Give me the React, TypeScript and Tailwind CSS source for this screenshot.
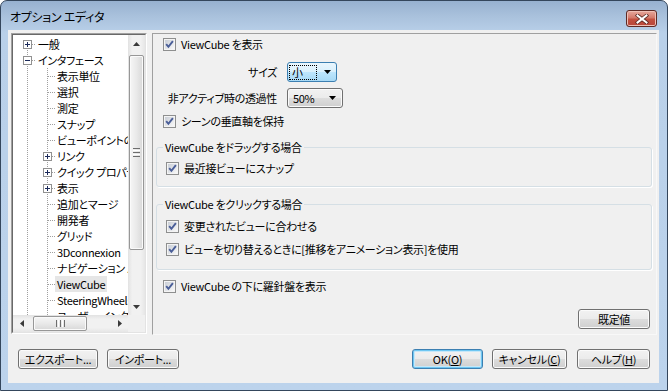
import React from "react";

const FONT =
  "font-['Noto_Sans_CJK_JP','Noto_Sans',sans-serif] [font-feature-settings:'palt'] text-[11px] tracking-[-0.3px] text-black";

function Check() {
  return (
    <svg width="13" height="13" viewBox="0 0 13 13" className="shrink-0">
      <defs>
        <linearGradient id="cbg" x1="0" y1="0" x2="1" y2="1">
          <stop offset="0" stopColor="#c9ced6" />
          <stop offset="1" stopColor="#f8f8f8" />
        </linearGradient>
      </defs>
      <rect x="0.5" y="0.5" width="12" height="12" fill="#f4f4f4" stroke="#8e8f8f" />
      <rect x="2" y="2" width="9" height="9" fill="url(#cbg)" />
      <path d="M3.2 6.2 L5.4 8.8 L9.9 3.2" fill="none" stroke="#4a5e98" strokeWidth="1.9" />
    </svg>
  );
}

function CheckRow({ label, className = "" }: { label: string; className?: string }) {
  return (
    <div className={"flex h-[20px] items-center " + className}>
      <Check />
      <span className="ml-[5px] whitespace-nowrap leading-[16px]">{label}</span>
    </div>
  );
}

function Arrow() {
  return (
    <svg width="7" height="4" viewBox="0 0 7 4" className="shrink-0">
      <polygon points="0,0 7,0 3.5,4" fill="#000" />
    </svg>
  );
}

const SURF =
  "h-[20px] rounded-[3px] border border-[#707070] bg-[linear-gradient(to_bottom,#f2f2f2_0%,#ebebeb_50%,#dddddd_50%,#cfcfcf_100%)] shadow-[inset_0_0_0_1px_#fbfbfb] leading-[16px] whitespace-nowrap";

const BTN = "flex items-center justify-center " + SURF;

const BTN_DEF =
  "flex h-[20px] items-center justify-center rounded-[3px] border border-[#3c7fb1] bg-[linear-gradient(to_bottom,#f2f2f2_0%,#ebebeb_50%,#dddddd_50%,#cfcfcf_100%)] shadow-[inset_0_0_0_1px_#6fc7f2,inset_0_0_0_2px_#c6e7f8] leading-[16px] whitespace-nowrap";

type Item = { label: string; level: 0 | 1; exp?: "+" | "-"; sel?: boolean; first?: boolean };

const items: Item[] = [
  { label: "一般", level: 0, exp: "+", first: true },
  { label: "インタフェース", level: 0, exp: "-" },
  { label: "表示単位", level: 1 },
  { label: "選択", level: 1 },
  { label: "測定", level: 1 },
  { label: "スナップ", level: 1 },
  { label: "ビューポイントのデフォルト", level: 1 },
  { label: "リンク", level: 1, exp: "+" },
  { label: "クイック プロパティ", level: 1, exp: "+" },
  { label: "表示", level: 1, exp: "+" },
  { label: "追加とマージ", level: 1 },
  { label: "開発者", level: 1 },
  { label: "グリッド", level: 1 },
  { label: "3Dconnexion", level: 1 },
  { label: "ナビゲーション バー", level: 1 },
  { label: "ViewCube", level: 1, sel: true },
  { label: "SteeringWheels", level: 1 },
  { label: "ユーザー インタフェース", level: 1 },
];

function Expander({ x, kind }: { x: number; kind: "+" | "-" }) {
  const c = x + 4;
  return (
    <g>
      <rect x={x + 0.5} y="4.5" width="8" height="8" fill="#fff" stroke="#919191" />
      <line x1={x + 2} y1="8.5" x2={x + 7} y2="8.5" stroke="#1b2a5a" />
      {kind === "+" && <line x1={c + 0.5} y1="6" x2={c + 0.5} y2="11" stroke="#1b2a5a" />}
    </g>
  );
}

function TreeRow({ it }: { it: Item }) {
  const w = it.level === 0 ? 23 : 42;
  const dot = { stroke: "#a0a0a0", strokeDasharray: "1 1" };
  return (
    <div className="flex h-[16px] items-center whitespace-nowrap">
      <svg width={w} height="16" className="shrink-0" shapeRendering="crispEdges">
        <line x1="14.5" y1={it.first ? 8 : 0} x2="14.5" y2="16" {...dot} />
        {it.level === 0 && <line x1="15" y1="8.5" x2="23" y2="8.5" {...dot} />}
        {it.level === 1 && (
          <>
            <line x1="34.5" y1="0" x2="34.5" y2="16" {...dot} />
            <line x1="35" y1="8.5" x2="42" y2="8.5" {...dot} />
          </>
        )}
        {it.exp && <Expander x={it.level === 0 ? 10 : 30} kind={it.exp} />}
      </svg>
      <span className={"px-[2px] leading-[16px] " + (it.sel ? "bg-[#e6e6e6]" : "")}>{it.label}</span>
    </div>
  );
}

function ArrowGlyph({ dir }: { dir: "up" | "down" | "left" | "right" }) {
  const pts =
    dir === "up"
      ? "0,4 7,4 3.5,0"
      : dir === "down"
      ? "0,0 7,0 3.5,4"
      : dir === "left"
      ? "4,0 4,7 0,3.5"
      : "0,0 0,7 4,3.5";
  const vert = dir === "up" || dir === "down";
  return (
    <svg width={vert ? 7 : 4} height={vert ? 4 : 7} className="shrink-0">
      <polygon points={pts} fill="#3a3a3a" />
    </svg>
  );
}

function Tree() {
  return (
    <div className="h-[301px] w-[136px] shrink-0 border border-t-[#a0a0a0] border-l-[#a0a0a0] border-r-white border-b-white">
      <div className="grid h-full w-full grid-cols-[115px_17px] grid-rows-[280px_17px] border border-t-[#696969] border-l-[#696969] border-r-[#e3e3e3] border-b-[#e3e3e3]">
        <div className="overflow-hidden bg-white pt-[1px]">
          {items.map((it, i) => (
            <TreeRow key={i} it={it} />
          ))}
        </div>
        {/* vertical scrollbar */}
        <div className="flex flex-col bg-[linear-gradient(to_right,#e2e2e2,#f1f1f1_25%,#f1f1f1_75%,#e6e6e6)]">
          <div className="flex h-[17px] items-center justify-center">
            <ArrowGlyph dir="up" />
          </div>
          <div className="mt-[3px] mx-[1px] flex h-[195px] flex-col items-center justify-center gap-[1px] rounded-[2px] border border-[#979797] bg-[linear-gradient(to_right,#f6f6f6,#e9e9e9_50%,#d8d8d8)] shadow-[inset_0_0_0_1px_#fafafa]">
            <div className="h-[1px] w-[7px] bg-[#6e6e6e]" />
            <div className="h-[1px] w-[7px] bg-[#fff]" />
            <div className="h-[1px] w-[7px] bg-[#6e6e6e]" />
            <div className="h-[1px] w-[7px] bg-[#fff]" />
            <div className="h-[1px] w-[7px] bg-[#6e6e6e]" />
          </div>
          <div className="flex-1" />
          <div className="flex h-[17px] items-center justify-center">
            <ArrowGlyph dir="down" />
          </div>
        </div>
        {/* horizontal scrollbar */}
        <div className="flex bg-[linear-gradient(to_bottom,#e2e2e2,#f1f1f1_25%,#f1f1f1_75%,#e6e6e6)]">
          <div className="flex w-[17px] items-center justify-center">
            <ArrowGlyph dir="left" />
          </div>
          <div className="ml-[3px] my-[1px] flex w-[54px] items-center justify-center gap-[1px] rounded-[2px] border border-[#979797] bg-[linear-gradient(to_bottom,#f6f6f6,#e9e9e9_50%,#d8d8d8)] shadow-[inset_0_0_0_1px_#fafafa]">
            <div className="h-[7px] w-[1px] bg-[#6e6e6e]" />
            <div className="h-[7px] w-[1px] bg-[#fff]" />
            <div className="h-[7px] w-[1px] bg-[#6e6e6e]" />
            <div className="h-[7px] w-[1px] bg-[#fff]" />
            <div className="h-[7px] w-[1px] bg-[#6e6e6e]" />
          </div>
          <div className="flex-1" />
          <div className="flex w-[17px] items-center justify-center">
            <ArrowGlyph dir="right" />
          </div>
        </div>
        <div className="bg-[#f0f0f0]" />
      </div>
    </div>
  );
}

function Panel() {
  return (
    <div className="flex h-[302px] w-[505px] shrink-0 flex-col border border-t-[#a0a0a0] border-l-[#a0a0a0] border-r-[#f8f8f8] border-b-[#f8f8f8] pb-[5px]">
      <CheckRow label="ViewCube を表示" className="pl-[10px]" />
      <div className="mt-[8px] flex h-[20px] items-center">
        <div className="w-[124px] text-right leading-[16px]">サイズ</div>
        <div className="ml-[10px] flex h-[20px] w-[50px] items-center rounded-[3px] border border-[#3c7fb1] bg-[linear-gradient(to_bottom,#eaf6fd_0%,#d9f0fc_50%,#bee6fd_50%,#a7d9f5_100%)] pr-[5px]">
          <div className="ml-[1px] flex h-[15px] w-[28px] items-center border border-dotted border-black pl-[2px] leading-[13px]">
            小
          </div>
          <div className="flex-1" />
          <Arrow />
        </div>
      </div>
      <div className="mt-[6px] flex h-[20px] items-center">
        <div className="w-[124px] text-right leading-[16px] whitespace-nowrap">非アクティブ時の透過性</div>
        <div className={"ml-[10px] flex w-[56px] items-center justify-between pl-[5px] pr-[6px] " + SURF}>
          <span>50%</span>
          <Arrow />
        </div>
      </div>
      <CheckRow label="シーンの垂直軸を保持" className="mt-[3px] pl-[10px]" />

      <fieldset className="ml-[3px] mr-[4px] mt-[8px] rounded-[3px] border border-[#d5dfe5] pb-[8px] pl-[9px] shadow-[1px_1px_0_#fff]">
        <legend className="-ml-[3px] px-[2px] leading-[16px]">ViewCube をドラッグする場合</legend>
        <CheckRow label="最近接ビューにスナップ" className="mt-[3px]" />
      </fieldset>

      <fieldset className="ml-[3px] mr-[4px] mt-[9px] rounded-[3px] border border-[#d5dfe5] pb-[10px] pl-[9px] shadow-[1px_1px_0_#fff]">
        <legend className="-ml-[3px] px-[2px] leading-[16px]">ViewCube をクリックする場合</legend>
        <CheckRow label="変更されたビューに合わせる" className="mt-[4px]" />
        <CheckRow label="ビューを切り替えるときに[推移をアニメーション表示]を使用" className="mt-[3px]" />
      </fieldset>

      <CheckRow label="ViewCube の下に羅針盤を表示" className="mt-[6px] pl-[10px]" />

      <div className="mt-auto flex justify-end pr-[6px]">
        <div className={"w-[72px] " + BTN}>既定値</div>
      </div>
    </div>
  );
}

export default function App() {
  return (
    <div className={"h-[391px] w-[668px] overflow-hidden " + FONT}>
      <div className="flex h-[391px] w-[668px] flex-col rounded-t-[7px] border border-[#34465c] bg-[linear-gradient(to_bottom,#97b1d0_0px,#a9c1dc_15px,#b9d0e9_32px,#bcd3ec_100%)]">
        {/* title bar */}
        <div className="flex h-[29px] shrink-0 items-start justify-between">
          <div className="ml-[9px] mt-[8px] text-[12px] leading-[16px] whitespace-nowrap">オプション エディタ</div>
          <div className="mr-[10px] mt-[9px] flex h-[17px] w-[31px] items-center justify-center rounded-[3px] border border-[#5e2a24] bg-[linear-gradient(to_bottom,#e7a99d_0%,#d47a6b_45%,#c2503f_55%,#b9473a_100%)] shadow-[inset_0_0_0_1px_#eebfb5]">
            <svg width="14" height="10" viewBox="0 0 14 10">
              <path d="M2.5 1.5 L11.5 8.5 M11.5 1.5 L2.5 8.5" stroke="#5a2a24" strokeWidth="3.6" strokeLinecap="square" />
              <path d="M2.5 1.5 L11.5 8.5 M11.5 1.5 L2.5 8.5" stroke="#ffffff" strokeWidth="2" strokeLinecap="square" />
            </svg>
          </div>
        </div>
        {/* client area */}
        <div className="ml-[7px] mr-[8px] flex h-[353px] shrink-0 flex-col bg-[#f0f0f0]">
          <div className="flex items-start gap-[5px] pl-[3px] pt-[3px]">
            <Tree />
            <Panel />
          </div>
          <div className="mt-[14px] flex items-center justify-between pl-[10px] pr-[9px]">
            <div className="flex gap-[9px]">
              <div className={"w-[80px] " + BTN}>エクスポート...</div>
              <div className={"w-[72px] " + BTN}>インポート...</div>
            </div>
            <div className="flex">
              <div className={"w-[71px] " + BTN_DEF}>
                OK(<span className="underline">O</span>)
              </div>
              <div className={"ml-[9px] w-[75px] " + BTN}>
                キャンセル(<span className="underline">C</span>)
              </div>
              <div className={"ml-[10px] w-[73px] " + BTN}>
                ヘルプ(<span className="underline">H</span>)
              </div>
            </div>
          </div>
        </div>
      </div>
    </div>
  );
}
